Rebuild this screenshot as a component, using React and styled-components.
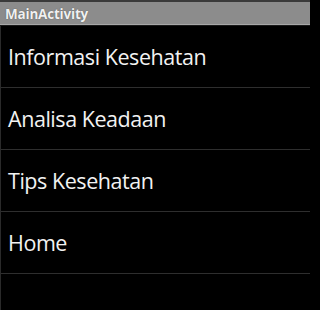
import React from "react";
import styled, { createGlobalStyle } from "styled-components";

const Global = createGlobalStyle`
  html, body { margin: 0; padding: 0; background: #000; }
  body { width: 310px; height: 310px; overflow: hidden; }
`;

const Screen = styled.div`
  width: 310px;
  height: 310px;
  background: #000;
  display: flex;
  flex-direction: column;
  border-left: 1px solid #2a2a2a;
  box-sizing: border-box;
  font-family: "Open Sans", "Noto Sans", sans-serif;
`;

const TitleBar = styled.div`
  height: 26px;
  box-sizing: border-box;
  border-top: 2px solid #3a3a3a;
  border-bottom: 1px solid #1a1a1a;
  box-shadow: inset 0 -1px 0 #a8a8a8;
  background: #8c8c8c;
  display: flex;
  align-items: center;
  padding-left: 5px;
  color: #f0f0f0;
  font-weight: 700;
  font-size: 13.5px;
  letter-spacing: -0.2px;
  text-shadow: 0 0 1px #444;
  margin-left: -1px;
`;

const List = styled.div`
  display: flex;
  flex-direction: column;
`;

const Row = styled.div`
  height: 62px;
  box-sizing: border-box;
  border-bottom: 1px solid #2e2e2e;
  display: flex;
  align-items: center;
  padding-left: 7px;
  color: #f2f2f2;
  font-size: 21.5px;
  letter-spacing: -0.45px;
`;

const items = ["Informasi Kesehatan", "Analisa Keadaan", "Tips Kesehatan", "Home"];

export default function App() {
  return (
    <>
      <Global />
      <Screen>
        <TitleBar>MainActivity</TitleBar>
        <List>
          {items.map((t) => (
            <Row key={t}>{t}</Row>
          ))}
        </List>
      </Screen>
    </>
  );
}
